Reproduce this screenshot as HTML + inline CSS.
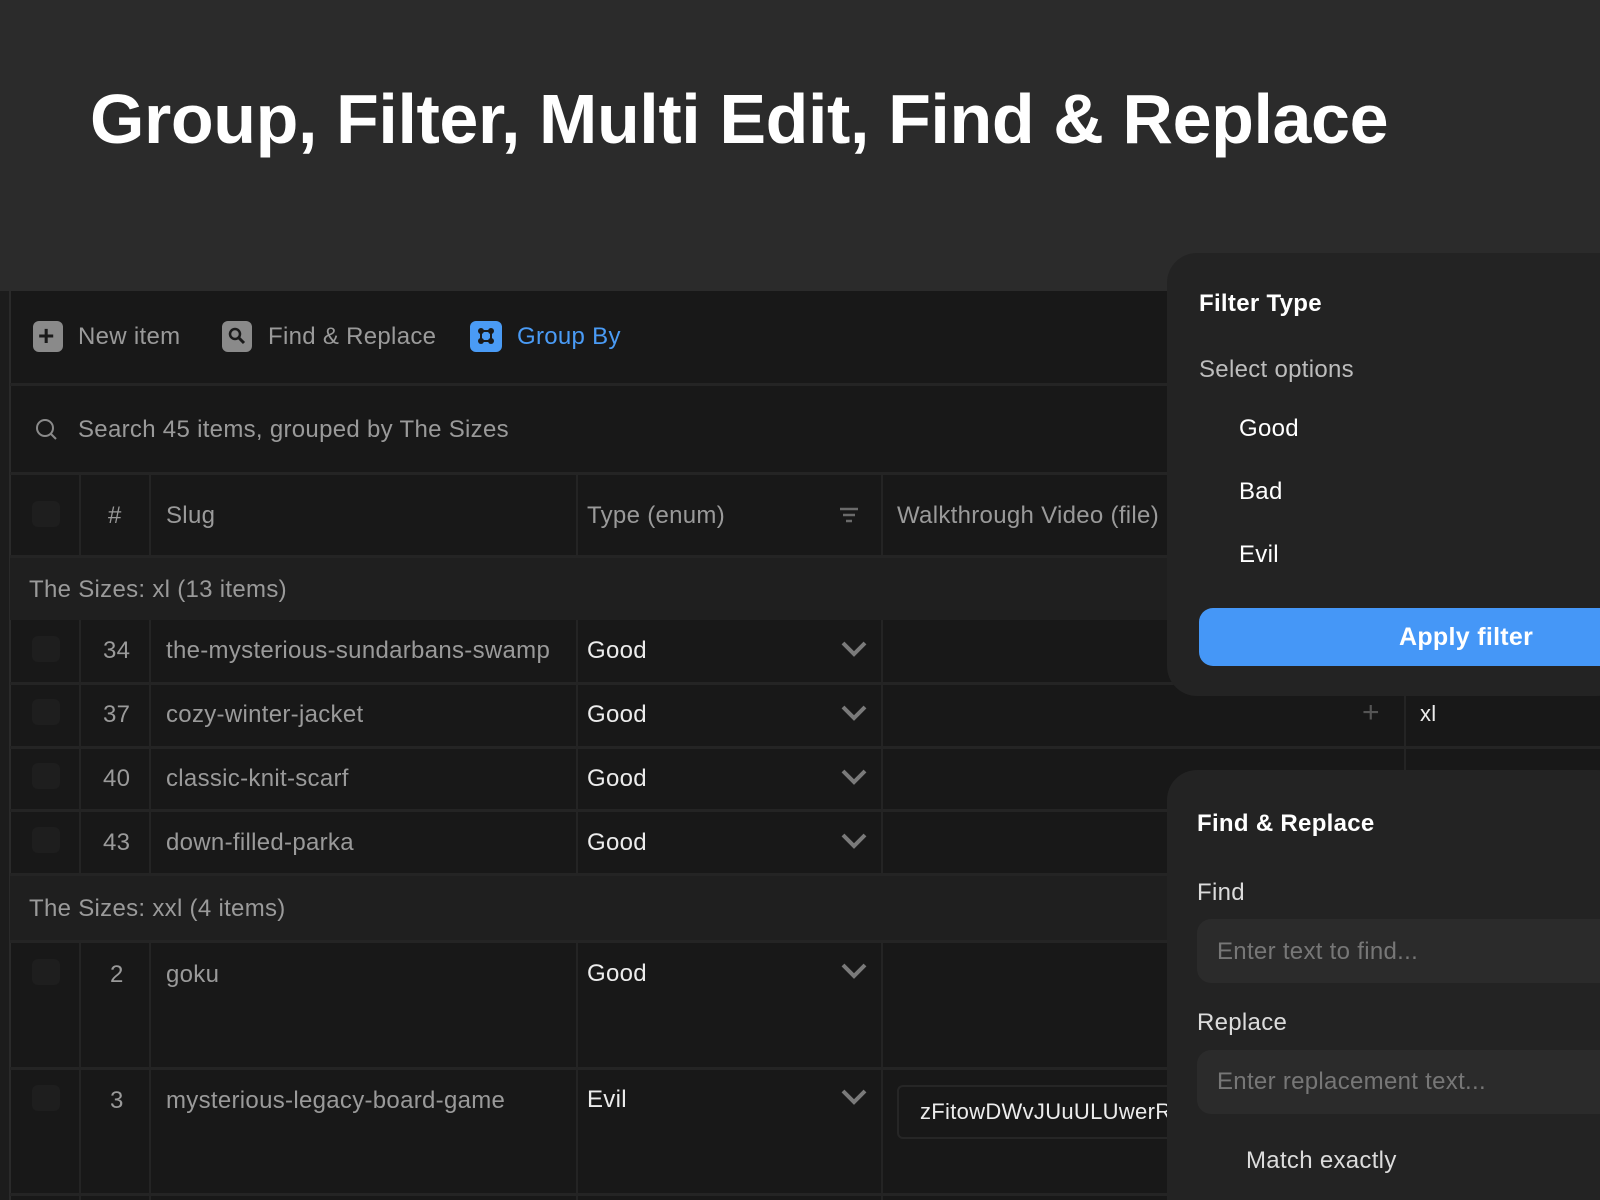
<!DOCTYPE html>
<html style="overflow:hidden;width:1600px;height:1200px"><head><meta charset="utf-8"><style>
*{margin:0;padding:0;box-sizing:border-box}
body{width:1600px;height:1200px;background:#2b2b2b;position:relative;overflow:hidden;font-family:"Liberation Sans",sans-serif}
.a{position:absolute}
.t{position:absolute;white-space:nowrap;line-height:1;letter-spacing:0.3px}
.title{left:90px;top:84px;font-size:70px;color:#fff;font-weight:bold;letter-spacing:-0.4px}
.main{left:0;top:291px;width:1600px;height:909px;background:#181818}
.hl{position:absolute;height:3px;background:#242424}
.vl{position:absolute;width:2px;background:#242424}
.grp{position:absolute;left:10px;width:1590px;background:#1f1f1f}
.g{color:#9a9a9a;font-size:24px}
.w{color:#ececec;font-size:24px}
.cb{position:absolute;left:32px;width:28px;height:26px;border-radius:6px;background:#1e1e1e}
.chev{position:absolute;left:840px;width:28px;height:18px}
.panel{position:absolute;left:1167px;width:460px;background:#232323;border-radius:30px}
</style></head><body>
<div class="t title">Group, Filter, Multi Edit, Find &amp; Replace</div>
<div class="a main"></div>
<div class="a" style="left:0;top:291px;width:9px;height:909px;background:#1c1c1c"></div>
<div class="vl" style="left:9px;top:291px;height:909px;background:#2a2a2a"></div>
<!-- toolbar -->
<div class="a" style="left:33px;top:321px;width:30px;height:31px;border-radius:6px;background:#8a8a8a"></div>
<div class="t" style="left:38px;top:322px;font-size:28px;color:#1a1a1a;font-weight:bold">+</div>
<div class="t g" style="left:78px;top:325px">New item</div>
<div class="a" style="left:222px;top:321px;width:30px;height:31px;border-radius:6px;background:#8a8a8a"></div>
<svg class="a" style="left:226px;top:325px" width="22" height="22" viewBox="0 0 22 22"><circle cx="9" cy="9" r="5" fill="none" stroke="#1a1a1a" stroke-width="2.5"/><path d="M13 13l5 5" stroke="#1a1a1a" stroke-width="3"/></svg>
<div class="t g" style="left:268px;top:325px">Find &amp; Replace</div>
<div class="a" style="left:470px;top:321px;width:32px;height:31px;border-radius:6px;background:#4a9bf5"></div>
<svg class="a" style="left:475px;top:325px" width="22" height="22" viewBox="0 0 22 22"><circle cx="6" cy="6" r="3" fill="#1a1a1a"/><circle cx="16" cy="6" r="3" fill="#1a1a1a"/><circle cx="6" cy="16" r="3" fill="#1a1a1a"/><circle cx="16" cy="16" r="3" fill="#1a1a1a"/><rect x="6" y="6" width="10" height="10" fill="none" stroke="#1a1a1a" stroke-width="2"/></svg>
<div class="t" style="left:517px;top:325px;font-size:24px;color:#4a9bf5;letter-spacing:0.3px">Group By</div>
<div class="hl" style="left:10px;top:383px;width:1590px"></div>
<!-- search -->
<svg class="a" style="left:35px;top:418px" width="24" height="24" viewBox="0 0 24 24"><circle cx="10" cy="10" r="8" fill="none" stroke="#8a8a8a" stroke-width="2"/><path d="M16 16l5 5" stroke="#8a8a8a" stroke-width="2"/></svg>
<div class="t g" style="left:78px;top:418px">Search 45 items, grouped by The Sizes</div>
<div class="hl" style="left:10px;top:472px;width:1590px"></div>
<!-- header -->
<div class="cb" style="top:501px"></div>
<div class="t g" style="left:108px;top:504px">#</div>
<div class="t g" style="left:166px;top:504px">Slug</div>
<div class="t g" style="left:587px;top:504px">Type (enum)</div>
<svg class="a" style="left:838px;top:506px" width="22" height="18" viewBox="0 0 22 18"><path d="M2 3h18M5 9h12M8 15h6" stroke="#6a6a6a" stroke-width="2.5"/></svg>
<div class="t g" style="left:897px;top:504px">Walkthrough Video (file)</div>
<div class="hl" style="left:10px;top:555px;width:1590px"></div>
<div class="vl" style="left:79px;top:474px;height:83px"></div>
<div class="vl" style="left:149px;top:474px;height:83px"></div>
<div class="vl" style="left:576px;top:474px;height:83px"></div>
<div class="vl" style="left:881px;top:474px;height:83px"></div>
<!-- groups -->
<div class="grp" style="top:558px;height:62px"></div>
<div class="t g" style="left:29px;top:578px">The Sizes: xl (13 items)</div>
<div class="grp" style="top:874px;height:67px"></div>
<div class="t g" style="left:29px;top:897px">The Sizes: xxl (4 items)</div>
<div class="hl" style="left:10px;top:873px;width:1590px"></div>
<div class="hl" style="left:10px;top:940px;width:1590px"></div>
<div class="hl" style="left:10px;top:682px;width:1590px"></div>
<div class="hl" style="left:10px;top:746px;width:1590px"></div>
<div class="hl" style="left:10px;top:809px;width:1590px"></div>
<div class="hl" style="left:10px;top:1067px;width:1590px"></div>
<div class="hl" style="left:10px;top:1193px;width:1590px"></div>
<div class="vl" style="left:79px;top:620px;height:254px"></div>
<div class="vl" style="left:149px;top:620px;height:254px"></div>
<div class="vl" style="left:576px;top:620px;height:254px"></div>
<div class="vl" style="left:881px;top:620px;height:254px"></div>
<div class="vl" style="left:1404px;top:683px;height:90px"></div>
<div class="vl" style="left:79px;top:942px;height:258px"></div>
<div class="vl" style="left:149px;top:942px;height:258px"></div>
<div class="vl" style="left:576px;top:942px;height:258px"></div>
<div class="vl" style="left:881px;top:942px;height:258px"></div>
<!-- rows -->
<div class="cb" style="top:636px"></div><div class="t g" style="left:103px;top:639px">34</div><div class="t g" style="left:166px;top:639px">the-mysterious-sundarbans-swamp</div><div class="t w" style="left:587px;top:639px">Good</div>
<div class="cb" style="top:699px"></div><div class="t g" style="left:103px;top:703px">37</div><div class="t g" style="left:166px;top:703px">cozy-winter-jacket</div><div class="t w" style="left:587px;top:703px">Good</div>
<div class="cb" style="top:763px"></div><div class="t g" style="left:103px;top:767px">40</div><div class="t g" style="left:166px;top:767px">classic-knit-scarf</div><div class="t w" style="left:587px;top:767px">Good</div>
<div class="cb" style="top:827px"></div><div class="t g" style="left:103px;top:831px">43</div><div class="t g" style="left:166px;top:831px">down-filled-parka</div><div class="t w" style="left:587px;top:831px">Good</div>
<div class="cb" style="top:959px"></div><div class="t g" style="left:110px;top:963px">2</div><div class="t g" style="left:166px;top:963px">goku</div><div class="t w" style="left:587px;top:962px">Good</div>
<div class="cb" style="top:1085px"></div><div class="t g" style="left:110px;top:1089px">3</div><div class="t g" style="left:166px;top:1089px">mysterious-legacy-board-game</div><div class="t w" style="left:587px;top:1088px">Evil</div>
<svg class="chev" style="top:640px" viewBox="0 0 28 18"><path d="M3 3l11 11 11-11" fill="none" stroke="#7a7a7a" stroke-width="4"/></svg>
<svg class="chev" style="top:704px" viewBox="0 0 28 18"><path d="M3 3l11 11 11-11" fill="none" stroke="#7a7a7a" stroke-width="4"/></svg>
<svg class="chev" style="top:768px" viewBox="0 0 28 18"><path d="M3 3l11 11 11-11" fill="none" stroke="#7a7a7a" stroke-width="4"/></svg>
<svg class="chev" style="top:832px" viewBox="0 0 28 18"><path d="M3 3l11 11 11-11" fill="none" stroke="#7a7a7a" stroke-width="4"/></svg>
<svg class="chev" style="top:962px" viewBox="0 0 28 18"><path d="M3 3l11 11 11-11" fill="none" stroke="#7a7a7a" stroke-width="4"/></svg>
<svg class="chev" style="top:1088px" viewBox="0 0 28 18"><path d="M3 3l11 11 11-11" fill="none" stroke="#7a7a7a" stroke-width="4"/></svg>
<div class="a" style="left:897px;top:1085px;width:300px;height:54px;border:2px solid #262626;border-radius:6px"></div>
<div class="t" style="left:920px;top:1101px;font-size:22px;color:#ececec">zFitowDWvJUuULUwerR</div>
<div class="t" style="left:1362px;top:698px;font-size:30px;color:#555">+</div>
<div class="t" style="left:1420px;top:703px;font-size:22px;color:#ececec">xl</div>
<!-- filter panel -->
<div class="panel" style="top:253px;height:443px"></div>
<div class="t" style="left:1199px;top:292px;font-size:24px;color:#fff;font-weight:bold">Filter Type</div>
<div class="t" style="left:1199px;top:358px;font-size:24px;color:#bdbdbd">Select options</div>
<div class="t" style="left:1239px;top:417px;font-size:24px;color:#fff">Good</div>
<div class="t" style="left:1239px;top:480px;font-size:24px;color:#fff">Bad</div>
<div class="t" style="left:1239px;top:543px;font-size:24px;color:#fff">Evil</div>
<div class="a" style="left:1199px;top:608px;width:420px;height:58px;background:#4597f7;border-radius:14px"></div>
<div class="t" style="left:1399px;top:625px;font-size:25px;color:#fff;font-weight:bold">Apply filter</div>
<!-- find panel -->
<div class="panel" style="top:770px;height:430px;border-bottom-left-radius:0;border-bottom-right-radius:0"></div>
<div class="t" style="left:1197px;top:812px;font-size:24px;color:#fff;font-weight:bold">Find &amp; Replace</div>
<div class="t" style="left:1197px;top:881px;font-size:24px;color:#dcdcdc">Find</div>
<div class="a" style="left:1197px;top:919px;width:420px;height:64px;background:#2b2b2b;border-radius:14px"></div>
<div class="t" style="left:1217px;top:940px;font-size:24px;color:#777">Enter text to find...</div>
<div class="t" style="left:1197px;top:1011px;font-size:24px;color:#dcdcdc">Replace</div>
<div class="a" style="left:1197px;top:1050px;width:420px;height:64px;background:#2b2b2b;border-radius:14px"></div>
<div class="t" style="left:1217px;top:1070px;font-size:24px;color:#777">Enter replacement text...</div>
<div class="t" style="left:1246px;top:1149px;font-size:24px;color:#dcdcdc">Match exactly</div>
</body></html>
